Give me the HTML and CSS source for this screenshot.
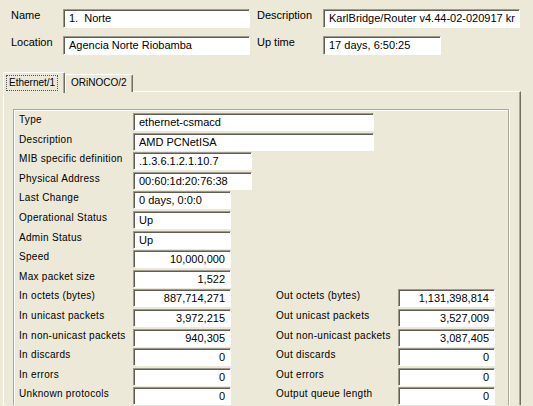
FILE: index.html
```html
<!DOCTYPE html>
<html>
<head>
<meta charset="utf-8">
<link rel="stylesheet" href="styles.css">
</head>
<body>
<div class="top">
  <div class="tlabel">Name</div>
  <div class="fld tfld w-name">1.&nbsp; Norte</div>
  <div class="tlabel">Description</div>
  <div class="fld tfld w-desc">KarlBridge/Router v4.44-02-020917 kr</div>
  <div class="tlabel">Location</div>
  <div class="fld tfld w-name">Agencia Norte Riobamba</div>
  <div class="tlabel">Up time</div>
  <div class="fld tfld w-up">17 days, 6:50:25</div>
</div>

<div class="tabs">
  <div class="tab active"><span class="focus">Ethernet/1</span></div>
  <div class="tab">ORiNOCO/2</div>
</div>

<div class="pane">
  <div class="group">
    <div class="lbl l1">Type</div>
    <div class="fld f1 w-long">ethernet-csmacd</div>
    <div class="lbl l1">Description</div>
    <div class="fld f1 w-long">AMD PCNetISA</div>
    <div class="lbl l1">MIB specific definition</div>
    <div class="fld f1 w-mid">.1.3.6.1.2.1.10.7</div>
    <div class="lbl l1">Physical Address</div>
    <div class="fld f1 w-mid">00:60:1d:20:76:38</div>
    <div class="lbl l1">Last Change</div>
    <div class="fld f1 w-num">0 days, 0:0:0</div>
    <div class="lbl l1">Operational Status</div>
    <div class="fld f1 w-num">Up</div>
    <div class="lbl l1">Admin Status</div>
    <div class="fld f1 w-num">Up</div>
    <div class="lbl l1">Speed</div>
    <div class="fld f1 w-num num">10,000,000</div>
    <div class="lbl l1">Max packet size</div>
    <div class="fld f1 w-num num">1,522</div>

    <div class="lbl l1">In octets (bytes)</div>
    <div class="fld f1 w-num num">887,714,271</div>
    <div class="lbl l2">Out octets (bytes)</div>
    <div class="fld f2 num">1,131,398,814</div>

    <div class="lbl l1">In unicast packets</div>
    <div class="fld f1 w-num num">3,972,215</div>
    <div class="lbl l2">Out unicast packets</div>
    <div class="fld f2 num">3,527,009</div>

    <div class="lbl l1">In non-unicast packets</div>
    <div class="fld f1 w-num num">940,305</div>
    <div class="lbl l2">Out non-unicast packets</div>
    <div class="fld f2 num">3,087,405</div>

    <div class="lbl l1">In discards</div>
    <div class="fld f1 w-num num">0</div>
    <div class="lbl l2">Out discards</div>
    <div class="fld f2 num">0</div>

    <div class="lbl l1">In errors</div>
    <div class="fld f1 w-num num">0</div>
    <div class="lbl l2">Out errors</div>
    <div class="fld f2 num">0</div>

    <div class="lbl l1">Unknown protocols</div>
    <div class="fld f1 w-num num">0</div>
    <div class="lbl l2">Output queue length</div>
    <div class="fld f2 num">0</div>
  </div>
</div>
</body>
</html>
```

FILE: styles.css
```css
html, body {
  margin: 0;
  padding: 0;
}
body {
  width: 533px;
  height: 406px;
  overflow: hidden;
  background: #ECE9D8;
  font-family: "Liberation Sans", Arial, sans-serif;
  color: #000;
}

.top {
  display: grid;
  grid-template-columns: 52px 194px 66px 197px;
  grid-auto-rows: 19px;
  row-gap: 8px;
  padding: 9px 0 0 11px;
}
.tlabel {
  font-size: 11px;
  line-height: 13px;
}

.fld {
  box-sizing: border-box;
  height: 18px;
  background: #fff;
  border: 1px solid;
  border-color: #9d9a8d #fff #fff #9d9a8d;
  box-shadow: inset 1px 1px 0 #5f5d54;
  font-size: 11px;
  line-height: 16px;
  padding: 0 3px 0 5px;
  white-space: nowrap;
  overflow: hidden;
}
.tfld {
  height: 19px;
  line-height: 17px;
  padding-left: 5px;
}
.w-name { width: 187px; }
.w-desc { width: 197px; }
.w-up { width: 118px; }

.tabs {
  display: flex;
  align-items: flex-end;
  height: 20px;
  margin-top: 17px;
  padding-left: 3px;
  position: relative;
  z-index: 1;
}
.tab {
  box-sizing: border-box;
  height: 18px;
  width: 68px;
  border-top: 1px solid #fff;
  border-left: 1px solid #fff;
  border-right: 1px solid #716F64;
  box-shadow: inset -1px 0 0 #ACA899;
  border-radius: 2px 2px 0 0;
  font-size: 10px;
  line-height: 16px;
  padding-left: 5px;
  white-space: nowrap;
  background: #ECE9D8;
}
.tab.active {
  height: 21px;
  width: 62px;
  padding: 2px 0 0 2px;
  margin-bottom: -1px;
}
.focus {
  display: inline-block;
  border: 1px dotted #555;
  padding: 0 2px;
  line-height: 14px;
}

.pane {
  box-sizing: border-box;
  width: 518px;
  margin-left: 3px;
  margin-top: -1px;
  border-top: 1px solid #fff;
  border-left: 1px solid #fff;
  border-right: 1px solid #716F64;
  box-shadow: inset -1px 0 0 #ACA899;
  padding: 17px 11px 0 9px;
}

.group {
  box-sizing: border-box;
  width: 496px;
  border: 1px solid #ACA899;
  border-bottom: none;
  box-shadow: inset 1px 1px 0 #fff, 1px 0 0 #fff;
  padding: 3px 0 0 0;
  display: grid;
  grid-template-columns: 119px 143px 122px 97px;
  grid-template-rows: repeat(14, 19.6px) 18px;
  align-items: start;
}
.lbl {
  font-size: 10px;
  letter-spacing: 0.3px;
  line-height: 13px;
  white-space: nowrap;
}
.l1 { grid-column: 1; padding-left: 5px; }
.f1 { grid-column: 2; }
.l2 { grid-column: 3; padding-left: 0; }
.f2 { grid-column: 4; width: 97px; }

.w-long { width: 241px; }
.w-mid { width: 119px; }
.w-num { width: 98px; }
.num {
  text-align: right;
  padding-right: 5px;
}
```
